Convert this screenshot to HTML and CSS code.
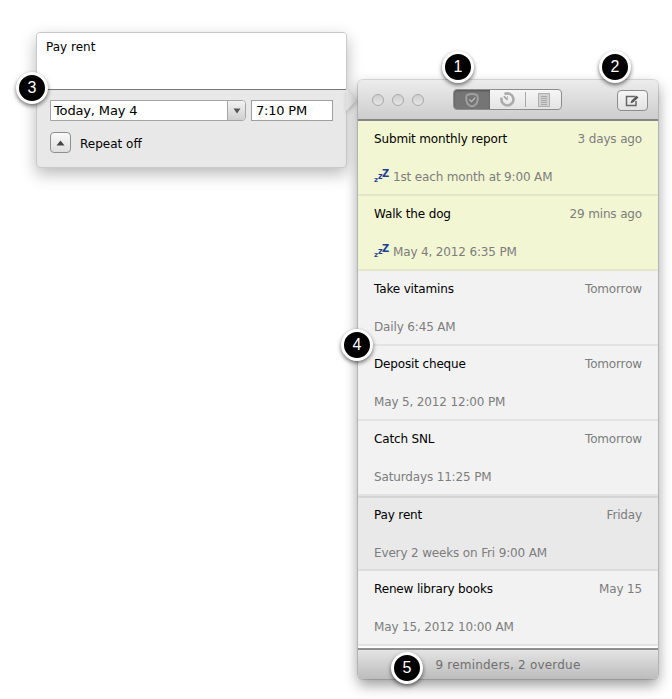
FILE: index.html
```html
<!DOCTYPE html>
<html lang="en">
<head>
<meta charset="utf-8">
<title>Reminders</title>
<link rel="stylesheet" href="styles.css">
</head>
<body>
<main class="canvas">
  <section class="popover">
    <span class="arrow"></span>
    <div class="note">Pay rent</div>
    <div class="form">
      <div class="fields">
        <div class="combo"><span class="combo-text">Today, May 4</span><span class="combo-btn"><svg width="8" height="6" viewBox="0 0 8 6"><path d="M0.5 0.5h7L4 5.5z" fill="#555"/></svg></span></div>
        <div class="time">7:10 PM</div>
      </div>
      <div class="repeat">
        <span class="disclosure"><svg width="9" height="6" viewBox="0 0 9 6"><path d="M4.500 0.500L8.500 5.500H0.500z" fill="#444"/></svg></span>
        <span class="repeat-label">Repeat off</span>
      </div>
    </div>
  </section>

  <section class="window">
    <header class="titlebar">
      <div class="lights"><i></i><i></i><i></i></div>
      <div class="segments">
        <span class="seg seg-on"><svg width="16" height="16" viewBox="0 0 16 16" fill="none"><path d="M2.800 3.200C6 1.600 10 1.600 13.200 3.200C14.600 7.500 13.300 13.800 8 14.300C2.700 13.800 1.400 7.500 2.800 3.200Z" stroke="#a0a0a0" stroke-width="2" fill="#757575"/><path d="M5.300 7.600L7.500 9.600L11.200 5.600" stroke="#bdbdbd" stroke-width="1.300"/></svg></span>
        <span class="seg"><svg width="17" height="17" viewBox="0 0 17 17" fill="none"><path d="M5.500 3.200A6 6 0 1 1 2.700 6.700" stroke="#ababab" stroke-width="2.600"/><path d="M8.500 8.800L4.800 5.200" stroke="#9c9c9c" stroke-width="1.600"/><path d="M8.500 5v4" stroke="#b5b5b5" stroke-width="1"/></svg></span>
        <span class="seg-sep"></span>
        <span class="seg"><svg width="14" height="16" viewBox="0 0 14 16" fill="none"><rect x="1.500" y="1.500" width="11" height="13" fill="#d2d2d2" stroke="#b0b0b0"/><path d="M4 4.500h6M4 6.500h6M4 8.500h6M4 10.500h6M4 12.500h6" stroke="#a9a9a9"/></svg></span>
      </div>
      <button class="compose" type="button"><svg width="15" height="12" viewBox="0 0 15 12" fill="none"><path d="M10.500 1.500H1.500v9h9.500V6" stroke="#666" stroke-width="1.500"/><path d="M5.500 8.200L6.300 5.700L11.500 0.800L13.500 2.500L8 7.500z" fill="#555"/></svg></button>
    </header>

    <div class="list">
      <article class="row row-due">
        <div class="line"><span class="name">Submit monthly report</span><span class="when">3 days ago</span></div>
        <div class="detail"><span class="zzz"><b class="z1">z</b><b class="z2">z</b><b class="z3">Z</b></span>1st each month at 9:00 AM</div>
      </article>
      <article class="row row-due">
        <div class="line"><span class="name">Walk the dog</span><span class="when">29 mins ago</span></div>
        <div class="detail"><span class="zzz"><b class="z1">z</b><b class="z2">z</b><b class="z3">Z</b></span>May 4, 2012 6:35 PM</div>
      </article>
      <article class="row">
        <div class="line"><span class="name">Take vitamins</span><span class="when">Tomorrow</span></div>
        <div class="detail">Daily 6:45 AM</div>
      </article>
      <article class="row">
        <div class="line"><span class="name">Deposit cheque</span><span class="when">Tomorrow</span></div>
        <div class="detail">May 5, 2012 12:00 PM</div>
      </article>
      <article class="row">
        <div class="line"><span class="name">Catch SNL</span><span class="when">Tomorrow</span></div>
        <div class="detail">Saturdays 11:25 PM</div>
      </article>
      <article class="row row-selected">
        <div class="line"><span class="name">Pay rent</span><span class="when">Friday</span></div>
        <div class="detail">Every 2 weeks on Fri 9:00 AM</div>
      </article>
      <article class="row">
        <div class="line"><span class="name">Renew library books</span><span class="when">May 15</span></div>
        <div class="detail">May 15, 2012 10:00 AM</div>
      </article>
    </div>

    <footer class="statusbar">9 reminders, 2 overdue</footer>
  </section>

  <span class="badge badge-1">1</span>
  <span class="badge badge-2">2</span>
  <span class="badge badge-3">3</span>
  <span class="badge badge-4">4</span>
  <span class="badge badge-5">5</span>
</main>
</body>
</html>
```
FILE: styles.css
```css
* { box-sizing: border-box; }
html, body { margin: 0; background: #fff; }
body { font-family: "DejaVu Sans", "Liberation Sans", sans-serif; font-size: 12px; color: #000; }
.canvas { position: relative; width: 672px; height: 699px; overflow: hidden; }

/* Popover */
.popover {
  position: absolute; left: 36px; top: 32px; width: 311px; height: 136px;
  border-radius: 4px; border: 1px solid #c9c9c9;
  box-shadow: 0 6px 16px rgba(0,0,0,.28);
  background: #e8e8e8; display: flex; flex-direction: column;
}
.note {
  height: 57px; background: #fff; padding: 6px 9px; border-bottom: 1px solid #777;
  border-radius: 3px 3px 0 0; line-height: 16px; position: relative;
}
.form { flex: 1; padding: 10px 13px 0; display: flex; flex-direction: column; gap: 11px; }
.fields { display: flex; gap: 5px; height: 21px; }
.combo {
  width: 196px; display: flex; background: #fff; border: 1px solid #a5a5a5; border-radius: 0 4px 4px 0;
}
.combo-text { flex: 1; padding-left: 3px; line-height: 19px; font-size: 13px; letter-spacing: -.15px; }
.combo-btn {
  width: 18px; display: flex; align-items: center; justify-content: center;
  background: linear-gradient(#f2f2f2, #cfcfcf); border-left: 1px solid #a5a5a5; border-radius: 0 3px 3px 0;
}
.time { width: 82px; background: #fff; border: 1px solid #a0a0a0; padding-left: 4px; line-height: 19px; font-size: 13px; letter-spacing: -.2px; }
.repeat { display: flex; align-items: center; gap: 9px; height: 21px; }
.repeat-label { padding-top: 2px; }
.disclosure {
  width: 21px; height: 21px; display: flex; align-items: center; justify-content: center;
  border: 1px solid #8f8f8f; border-radius: 4px; background: linear-gradient(#fafafa, #dedede);
}
.arrow {
  position: absolute; right: -11px; top: 56px; width: 0; height: 0;
  border-top: 11px solid transparent; border-bottom: 11px solid transparent; border-left: 11px solid #e4e4e4;
  filter: drop-shadow(1px 2px 2px rgba(0,0,0,.2));
}

/* Main window */
.window {
  position: absolute; left: 358px; top: 80px; width: 300px; height: 599px;
  border-radius: 5px; display: flex; flex-direction: column; overflow: hidden;
  box-shadow: 0 0 0 1px rgba(0,0,0,.12), 0 6px 14px rgba(0,0,0,.4);
  background: #f2f2f2;
}
.titlebar {
  height: 41px; flex: none; display: flex; align-items: center; padding: 0 10px 0 14px;
  background: linear-gradient(#ececec, #cdcdcd); border-bottom: 2px solid #858585;
}
.lights { display: flex; gap: 8px; width: 81px; }
.lights i { width: 12px; height: 12px; border-radius: 50%; border: 1px solid #a9a9a9; background: linear-gradient(#cfcfcf, #e6e6e6); }
.segments {
  display: flex; align-items: center; width: 109px; height: 21px;
  border: 1px solid #8d8d8d; border-radius: 4px; background: linear-gradient(#f6f6f6, #e4e4e4);
}
.seg { width: 35px; display: flex; align-items: center; justify-content: center; height: 100%; }
.seg-on { width: 36px; background: #757575; border-radius: 3px 0 0 3px; box-shadow: inset 0 1px 2px rgba(0,0,0,.3); }
.seg-sep { width: 1px; height: 15px; background: #a9a9a9; }
.compose {
  margin-left: auto; margin-top: 2px; width: 31px; height: 21px; padding: 0; display: flex; align-items: center; justify-content: center;
  border: 1px solid #8d8d8d; border-radius: 4px; background: linear-gradient(#f6f6f6, #e2e2e2);
}
.list { flex: 1; display: flex; flex-direction: column; background: #fff; }
.row {
  height: 75px; flex: none; padding: 10px 16px 0; background: #f2f2f2;
  border-bottom: 2px solid #e3e3e3; display: flex; flex-direction: column; gap: 22px;
}
.row-due { background: #f3f6d3; border-bottom-color: #e4e6ca; }
.row-selected { background: #e9e9e9; border-top: 2px solid #d4d4d4; border-bottom-color: #dcdcdc; padding-top: 9px; }
.line { display: flex; justify-content: space-between; line-height: 16px; }
.name { letter-spacing: -.15px; }
.when, .detail { color: #7d7d7d; letter-spacing: -.15px; }
.detail { line-height: 16px; display: flex; align-items: center; }
.zzz { width: 19px; height: 16px; position: relative; color: #1f3f94; font-weight: 700; flex: none; }
.zzz b { position: absolute; line-height: 1; }
.z1 { font-size: 7px; left: 0; top: 8px; }
.z2 { font-size: 8px; left: 4px; top: 4px; }
.z3 { font-size: 10px; left: 8px; top: 0; }
.statusbar {
  height: 31px; flex: none; display: flex; align-items: center; justify-content: center;
  color: #6f6f6f; background: linear-gradient(#e4e4e4, #bcbcbc); border-top: 2px solid #8f8f8f;
  letter-spacing: .2px;
}

/* Callouts */
.badge {
  position: absolute; width: 32px; height: 32px; border-radius: 50%; background: #000; color: #fff;
  border: 3px solid #fff; box-shadow: 0 2px 4px rgba(0,0,0,.55);
  display: flex; align-items: center; justify-content: center;
  font-family: "Liberation Sans", sans-serif; font-size: 16px;
}
.badge-1 { left: 442px; top: 51px; }
.badge-2 { left: 599px; top: 51px; }
.badge-3 { left: 16px; top: 72px; }
.badge-4 { left: 341px; top: 329px; }
.badge-5 { left: 391px; top: 652px; }
```
